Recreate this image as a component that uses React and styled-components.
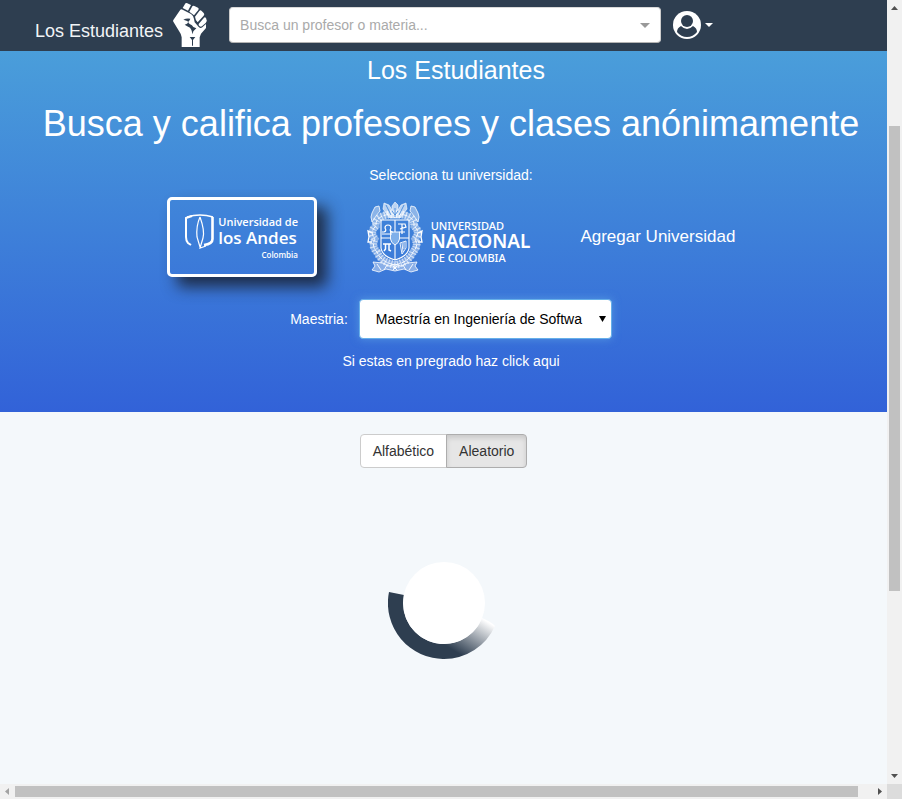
import React from "react";
import styled, { createGlobalStyle, css } from "styled-components";

const GlobalStyle = createGlobalStyle`
  *, *::before, *::after { box-sizing: border-box; }
  body {
    margin: 0;
    overflow: hidden;
    font: 14px/20px "Liberation Sans", Arial, sans-serif;
    color: #333;
    background: #f4f8fb;
  }
  button, input, select { font: inherit; }
`;

const Frame = styled.div`
  display: grid;
  grid-template-columns: minmax(0, 1fr) 15px;
  grid-template-rows: minmax(0, 1fr) 15px;
  height: 100vh;
`;

const Page = styled.div`
  overflow: hidden;
  background: #f4f8fb;
`;

const Navbar = styled.header`
  display: flex;
  align-items: center;
  height: 51px;
  padding: 0 0 1px 35px;
  background: #2e3e50;
`;

const Brand = styled.a`
  display: flex;
  align-items: center;
  gap: 10px;
  margin-right: 22px;
  color: #f1f4f6;
  font-size: 18px;
  text-decoration: none;
  span { padding-top: 12px; }
  svg { display: block; }
`;

const SearchBox = styled.div`
  display: flex;
  align-items: center;
  flex: 0 1 432px;
  height: 36px;
  padding: 0 10px;
  border: 1px solid #ccc;
  border-color: #d9d9d9 #ccc #b3b3b3;
  border-radius: 4px;
  background: #fff;
`;

const SearchInput = styled.input`
  flex: 1;
  min-width: 0;
  padding: 0;
  border: 0;
  outline: 0;
  background: none;
  &::placeholder { color: #aaa; opacity: 1; }
`;

const Caret = styled.span`
  border: solid transparent;
  border-width: ${(p) => p.$size}px ${(p) => p.$size}px 0;
  border-top-color: ${(p) => p.$color};
`;

const AccountButton = styled.button`
  display: flex;
  align-items: center;
  gap: 4px;
  margin-left: 12px;
  padding: 0;
  border: 0;
  background: none;
  svg { display: block; }
`;

const Hero = styled.section`
  display: flex;
  flex-direction: column;
  align-items: center;
  width: calc(100% + 15px);
  height: 361px;
  padding-top: 5px;
  color: #fff;
  background: linear-gradient(#4a9eda, #3262d8);
`;

const Title = styled.h1`
  margin: 0 0 20px;
  padding-left: 10px;
  font-size: 25px;
  font-weight: 400;
  line-height: 28px;
`;

const Headline = styled.h2`
  margin: 0 0 21px;
  font-size: 36px;
  font-weight: 400;
  line-height: 40px;
  white-space: nowrap;
`;

const Prompt = styled.p`
  margin: 0 0 12px;
`;

const Universities = styled.div`
  display: flex;
  align-items: center;
  gap: 50px;
  height: 80px;
  margin-bottom: 22px;
`;

const UniversityButton = styled.button`
  display: flex;
  align-items: center;
  padding: 0;
  border: 0;
  color: #fff;
  background: none;
  ${(p) => p.$selected && css`
    justify-content: center;
    width: 150px;
    height: 80px;
    border: 3px solid #fff;
    border-radius: 5px;
    box-shadow: 10px 10px 15px rgba(25, 32, 48, 0.85);
  `}
`;

const AndesMark = styled.span`
  display: flex;
  gap: 3px;
  padding-top: 3px;
  svg { flex: none; }
`;

const AndesName = styled.span`
  display: flex;
  flex-direction: column;
  font-family: "Open Sans", sans-serif;
  font-weight: 600;
  text-align: left;
  white-space: nowrap;
`;

const AndesLine = styled.span`
  font-size: ${(p) => p.$size}px;
  line-height: ${(p) => p.$line}px;
  text-align: ${(p) => (p.$end ? "right" : "left")};
`;

const NacionalMark = styled.span`
  display: flex;
  align-items: center;
  gap: 8px;
`;

const NacionalName = styled.span`
  display: flex;
  flex-direction: column;
  padding-top: 8px;
  font-family: "Noto Sans", sans-serif;
  text-align: left;
`;

const NacionalLine = styled.span`
  font-size: ${(p) => p.$size}px;
  font-weight: ${(p) => p.$weight};
  line-height: ${(p) => p.$line}px;
`;

const AddUniversity = styled.a`
  color: #fff;
  font-size: 17px;
  text-decoration: none;
`;

const ProgramField = styled.div`
  display: flex;
  align-items: center;
  gap: 11px;
  margin-bottom: 12px;
`;

const SelectShell = styled.span`
  display: grid;
  align-items: center;
  width: 253px;
  height: 40px;
  > * { grid-area: 1 / 1; }
`;

const ProgramSelect = styled.select`
  width: 100%;
  height: 100%;
  padding: 0 28px 0 16px;
  border: 1px solid #66afe9;
  border-radius: 4px;
  outline: 0;
  appearance: none;
  color: #000;
  background: #fff;
  box-shadow: 0 0 8px rgba(102, 175, 233, 0.6);
  text-overflow: clip;
`;

const SelectArrow = styled.svg`
  justify-self: end;
  margin-right: 6px;
  pointer-events: none;
`;

const UndergradLink = styled.a`
  color: #fff;
  text-decoration: none;
`;

const Results = styled.main`
  display: flex;
  flex-direction: column;
  align-items: center;
  gap: 79px;
  padding-top: 22px;
`;

const ButtonGroup = styled.div`
  display: flex;
`;

const SortButton = styled.button`
  height: 34px;
  padding: 0 12px;
  border: 1px solid #ccc;
  border-radius: 4px 0 0 4px;
  color: #333;
  background: #fff;
  & + & { margin-left: -1px; border-radius: 0 4px 4px 0; }
  ${(p) => p.$active && css`
    border-color: #adadad;
    background: #e6e6e6;
    box-shadow: inset 0 3px 5px rgba(0, 0, 0, 0.125);
  `}
`;

const Track = styled.div`
  display: flex;
  flex-direction: ${(p) => (p.$vertical ? "column" : "row")};
  align-items: stretch;
  background: #f1f1f1;
`;

const TrackArrow = styled.svg`
  flex: none;
  width: 15px;
  height: 15px;
`;

const TrackSpace = styled.span`
  flex: ${(p) => p.$share} 0 0;
`;

const Thumb = styled.span`
  flex: ${(p) => p.$share} 0 0;
  margin: ${(p) => (p.$vertical ? "0 2px" : "2px 0")};
  background: #c1c1c1;
`;

const Corner = styled.div`
  background: #dcdcdc;
`;

function Fist() {
  return (
    <svg width="34" height="44" viewBox="0 0 102 132" fill="#fff" aria-hidden="true">
      <path d="M1 51 22 20Q25 17 29 20L54 33Q62 38 63 48L65 58 78 73Q83 77 88 73L99 63V75L84 92 80 103V132H26V103Q26 95 18 84L2 58Q-1 54 1 51Z" />
      <path d="M29 15 36 3Q38-1 43 1L54 6 45 23Z" />
      <path d="M49 26 58 10Q60 7 64 9L75 14Q79 17 76 21L63 37Z" />
      <path d="M66 41 79 24Q82 20 86 24L92 30Q96 34 92 38L74 58Q68 54 66 41Z" />
      <path d="M77 63 93 44Q97 41 99 46L101 52Q102 56 98 60L87 70Q81 73 77 67Z" />
      <path d="M31 50Q40 45 52 47L50 52Q42 58 50 63Q58 66 61 72L70 76 61 85 59 94Q57 80 51 74Q45 71 35 65Q48 62 44 55Q39 52 31 50Z" fill="#2e3e50" />
      <path d="M50 102H67L60 111V128H57V111Z" fill="#2e3e50" />
    </svg>
  );
}

function Avatar() {
  return (
    <svg width="28" height="28" viewBox="0 0 28 28" aria-hidden="true">
      <circle cx="14" cy="14" r="14" fill="#fff" />
      <circle cx="14" cy="10" r="6" fill="#2e3e50" />
      <path d="M8 15Q4 17 4 21Q8 26 14 26T24 21Q24 17 20 15Q17 18 14 18T8 15Z" fill="#2e3e50" />
    </svg>
  );
}

function AndesShield() {
  return (
    <svg width="30" height="36" viewBox="0 0 30 36" fill="none" stroke="#fff" aria-hidden="true">
      <path d="M6 31 3 29Q1 27 1 23V4L7 2" strokeWidth="2" />
      <path d="M2 3Q15-1 28 3" strokeWidth="1.500" />
      <path d="M27.500 3V25Q27.500 30 19 31" strokeWidth="2.600" />
      <path d="M15 3Q11 12 12 23L15 33M15 3Q20 17 18 24L15 34 21 32" strokeWidth="1.200" />
    </svg>
  );
}

function Crest() {
  const wreath = "M28 13C16 13 8 17 9 25Q2 31 8 38Q4 45 10 51Q14 61 28 64Q42 61 46 51Q52 45 48 38Q54 31 47 25C48 17 40 13 28 13Z";
  return (
    <svg width="56" height="72" viewBox="0 0 56 72" fill="none" stroke="#fff" aria-hidden="true">
      <path d={wreath} strokeWidth="7" strokeOpacity=".4" />
      <path d={wreath} strokeWidth="8" strokeOpacity=".6" strokeDasharray="1.200 2" />
      <path d={wreath} strokeWidth="1" strokeOpacity=".9" strokeDasharray="5 1.500" />
      <path d="M14 19H42V47Q41 55 28 59Q15 55 14 47ZM28 19V59M14 37H42" strokeWidth="1.100" />
      <path d="M23 17 16 8 17 2 22 4 25 9 25 5 28 1 31 4 31 9 34 4 39 2 40 8 33 17Z" fill="#fff" fillOpacity=".65" strokeWidth=".6" />
      <path d="m19 4 5 10m13-10-5 10M28 7v9M25 10l3 4 3-4" stroke="#4389db" strokeWidth=".9" />
      <path d="M5 12 8 6 12 5 13 10 9 15 5 21 4 16ZM51 12 48 6 44 5 43 10 47 15 51 21 52 16Z" fill="#fff" fillOpacity=".4" strokeWidth=".8" />
      <path d="M5 32 1 30 2 36 1 41 5 41M51 32l4-2-1 6 1 5-4 0" strokeWidth="1.300" />
      <path d="m6 61 10 1 6 3 6-2 6 2 6-3 10-1-2 4 3 4-7 2-7-3-9 2-9-2-7 3-7-2 3-4Z" fill="#fff" fillOpacity=".4" strokeWidth=".8" />
      <path d="M10 63l4 6M20 64l-3 5M26 65l4 4M30 65l-4 4M36 64l3 5M46 63l-4 6" strokeWidth=".9" />
      <path d="M23.500 31H32.500V38Q32 42 28 44Q24 42 23.500 38Z" fill="#7fb0ea" strokeWidth=".9" />
      <path d="M17 31Q20 30 18 27Q18 24 21 24T24 27Q22 30 25 31M15 31H18M23 31H26M15 33H25" strokeWidth="1.200" />
      <path d="M31 23H38L39 26 33 28M35 23V27M32 31H38M35 28V33" strokeWidth="1.200" />
      <path d="M16 43H24M18.500 43V48L17 50M22 43V49L24 50" strokeWidth="1.500" />
      <path d="M33 42 39 40V47L35 53ZM35 42 36 51M37 41V48" strokeWidth=".9" />
    </svg>
  );
}

function Spinner() {
  return (
    <svg width="112" height="112" viewBox="0 0 112 112" role="img" aria-label="Cargando">
      <defs>
        <linearGradient id="fade" gradientUnits="userSpaceOnUse" x1="70" y1="106" x2="92" y2="70">
          <stop offset="0" stopColor="#2e3e50" />
          <stop offset="1" stopColor="#fff" />
        </linearGradient>
      </defs>
      <path d="M1 45A56 56 0 0 0 57 112V97A41 41 0 0 1 16 48Z" fill="#2e3e50" />
      <path d="M56 112A56 56 0 0 0 107 79Q102 74 94 71A41 41 0 0 1 56 97Z" fill="url(#fade)" />
      <circle cx="56" cy="56" r="41" fill="#fff" />
    </svg>
  );
}

export default function App() {
  return (
    <>
      <GlobalStyle />
      <Frame>
        <Page>
          <Navbar>
            <Brand href="#">
              <span>Los Estudiantes</span>
              <Fist />
            </Brand>
            <SearchBox>
              <SearchInput aria-label="Buscar" placeholder="Busca un profesor o materia..." />
              <Caret $size={5} $color="#999" />
            </SearchBox>
            <AccountButton aria-label="Cuenta">
              <Avatar />
              <Caret $size={4} $color="#fff" />
            </AccountButton>
          </Navbar>
          <Hero>
            <Title>Los Estudiantes</Title>
            <Headline>Busca y califica profesores y clases anónimamente</Headline>
            <Prompt>Selecciona tu universidad:</Prompt>
            <Universities>
              <UniversityButton $selected>
                <AndesMark>
                  <AndesShield />
                  <AndesName>
                    <AndesLine $size={11} $line={15}>Universidad de</AndesLine>
                    <AndesLine $size={17} $line={17}>los Andes</AndesLine>
                    <AndesLine $size={8} $line={17} $end>Colombia</AndesLine>
                  </AndesName>
                </AndesMark>
              </UniversityButton>
              <UniversityButton>
                <NacionalMark>
                  <Crest />
                  <NacionalName>
                    <NacionalLine $size={11} $line={13} $weight={500}>UNIVERSIDAD</NacionalLine>
                    <NacionalLine $size={19} $line={19} $weight={600}>NACIONAL</NacionalLine>
                    <NacionalLine $size={11} $line={13} $weight={500}>DE COLOMBIA</NacionalLine>
                  </NacionalName>
                </NacionalMark>
              </UniversityButton>
              <AddUniversity href="#">Agregar Universidad</AddUniversity>
            </Universities>
            <ProgramField>
              <label htmlFor="program">Maestria:</label>
              <SelectShell>
                <ProgramSelect id="program">
                  <option>Maestría en Ingeniería de Softwa</option>
                </ProgramSelect>
                <SelectArrow width="7" height="6" viewBox="0 0 7 6" aria-hidden="true">
                  <path d="M0 0H7L3.500 6Z" />
                </SelectArrow>
              </SelectShell>
            </ProgramField>
            <UndergradLink href="#">Si estas en pregrado haz click aqui</UndergradLink>
          </Hero>
          <Results>
            <ButtonGroup>
              <SortButton>Alfabético</SortButton>
              <SortButton $active>Aleatorio</SortButton>
            </ButtonGroup>
            <Spinner />
          </Results>
        </Page>
        <Track $vertical>
          <TrackArrow viewBox="0 0 15 15"><path d="M4 10H11L7.500 6Z" fill="#505050" /></TrackArrow>
          <TrackSpace $share={111} />
          <Thumb $share={465} $vertical />
          <TrackSpace $share={178} />
          <TrackArrow viewBox="0 0 15 15"><path d="M4 5H11L7.500 9Z" fill="#505050" /></TrackArrow>
        </Track>
        <Track>
          <TrackArrow viewBox="0 0 15 15"><path d="M9 4V11L5 7.500Z" fill="#a3a3a3" /></TrackArrow>
          <Thumb $share={843} />
          <TrackSpace $share={14} />
          <TrackArrow viewBox="0 0 15 15"><path d="M6 4V11L10 7.500Z" fill="#505050" /></TrackArrow>
        </Track>
        <Corner />
      </Frame>
    </>
  );
}
